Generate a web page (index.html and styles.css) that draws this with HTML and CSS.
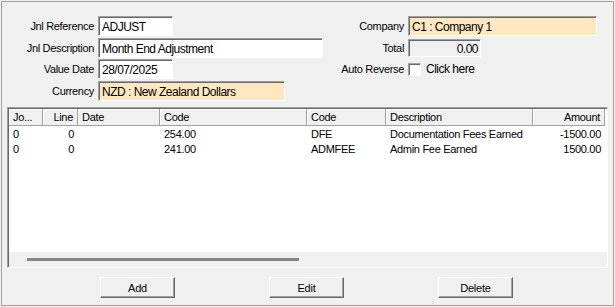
FILE: index.html
```html
<!DOCTYPE html>
<html lang="en">
<head>
    <meta charset="UTF-8">
    <title>Journal Entry</title>
    <link rel="stylesheet" href="styles.css">
</head>
<body>
    <div class="frame">
        <div class="form">
            <div class="form-left">
                <label class="lbl">Jnl Reference</label>
                <div class="field short">ADJUST</div>
                <label class="lbl">Jnl Description</label>
                <div class="field long">Month End Adjustment</div>
                <label class="lbl">Value Date</label>
                <div class="field short">28/07/2025</div>
                <label class="lbl">Currency</label>
                <div class="field lookup currency">NZD : New Zealand Dollars</div>
            </div>
            <div class="form-right">
                <label class="lbl">Company</label>
                <div class="field lookup company">C1 : Company 1</div>
                <label class="lbl">Total</label>
                <div class="field readonly total">0.00</div>
                <label class="lbl">Auto Reverse</label>
                <div class="check-row"><span class="checkbox"></span>Click here</div>
            </div>
        </div>

        <div class="grid">
            <div class="grid-head">
                <div class="col c-jo">Jo...</div>
                <div class="col c-line num">Line</div>
                <div class="col c-date">Date</div>
                <div class="col c-code">Code</div>
                <div class="col c-code2">Code</div>
                <div class="col c-desc">Description</div>
                <div class="col c-amt num">Amount</div>
            </div>
            <div class="grid-body">
                <div class="grid-row">
                    <div class="col c-jo">0</div>
                    <div class="col c-line num">0</div>
                    <div class="col c-date"></div>
                    <div class="col c-code">254.00</div>
                    <div class="col c-code2">DFE</div>
                    <div class="col c-desc">Documentation Fees Earned</div>
                    <div class="col c-amt num">-1500.00</div>
                </div>
                <div class="grid-row">
                    <div class="col c-jo">0</div>
                    <div class="col c-line num">0</div>
                    <div class="col c-date"></div>
                    <div class="col c-code">241.00</div>
                    <div class="col c-code2">ADMFEE</div>
                    <div class="col c-desc">Admin Fee Earned</div>
                    <div class="col c-amt num">1500.00</div>
                </div>
            </div>
            <div class="hscroll"><span class="thumb"></span></div>
        </div>

        <div class="actions">
            <button class="btn">Add</button>
            <button class="btn">Edit</button>
            <button class="btn">Delete</button>
        </div>
    </div>
</body>
</html>
```

FILE: styles.css
```css
body {
    margin: 0;
    padding: 1px;
    background-color: #f0f0f0;
    font-family: 'Liberation Sans', Arial, sans-serif;
    font-size: 11px;
    letter-spacing: -0.3px;
    color: #000;
}

.frame {
    box-sizing: border-box;
    width: 613px;
    height: 305px;
    border: 1px solid #a0a0a0;
    background-color: #f0f0f0;
}

.form {
    display: flex;
    padding-top: 14px;
    height: 91px;
}

.form-left,
.form-right {
    display: grid;
    align-items: center;
    column-gap: 4px;
    grid-auto-rows: 20px;
    row-gap: 1.7px;
}

.form-left {
    width: 330px;
    grid-template-columns: 92px auto;
}

.form-right {
    grid-template-columns: 72px auto;
}

.lbl {
    text-align: right;
    white-space: nowrap;
    letter-spacing: -0.33px;
}

.field {
    box-sizing: border-box;
    height: 20px;
    padding: 2px 3px 0 3px;
    background-color: #fff;
    border: 1px solid #fff;
    border-top-color: #a0a0a0;
    border-left-color: #a0a0a0;
    box-shadow: inset 1px 1px 0 #696969;
    font-size: 12px;
    letter-spacing: -0.5px;
    line-height: 16px;
    white-space: nowrap;
}

.short { width: 75px; }
.long { width: 225px; }

.lookup {
    background-color: #ffe8c0;
}

.currency { width: 187px; }
.company { width: 189px; }

.readonly {
    background-color: #f0f0f0;
}

.total {
    width: 73px;
    height: 18px;
    line-height: 15px;
    text-align: right;
    padding-right: 2px;
}

.check-row {
    display: flex;
    align-items: center;
    gap: 5px;
    font-size: 12px;
    letter-spacing: -0.5px;
}

.checkbox {
    box-sizing: border-box;
    width: 13px;
    height: 13px;
    background-color: #fff;
    border: 1px solid #fff;
    border-top-color: #a0a0a0;
    border-left-color: #a0a0a0;
    box-shadow: inset 1px 1px 0 #696969;
}

.grid {
    box-sizing: border-box;
    margin: 0 0 0 5px;
    width: 601px;
    height: 161px;
    display: flex;
    flex-direction: column;
    border: 1px solid #fff;
    border-top-color: #a0a0a0;
    border-left-color: #a0a0a0;
    box-shadow: inset 1px 1px 0 #696969;
    padding: 1px 0 0 1px;
}

.grid-head {
    display: flex;
    height: 17px;
    background-color: #fff;
}

.grid-head .col {
    box-sizing: border-box;
    height: 17px;
    line-height: 16px;
    padding: 0 4px;
    background-color: #f0f0f0;
    border-right: 1px solid #a0a0a0;
    border-bottom: 1px solid #a0a0a0;
    box-shadow: inset 1px 1px 0 #fff;
}

.grid-body {
    flex: 1;
    background-color: #fff;
    padding-top: 1px;
}

.grid-row {
    display: flex;
    height: 15px;
    line-height: 15px;
}

.col {
    box-sizing: border-box;
    padding: 0 4px;
    white-space: nowrap;
    overflow: hidden;
}

.num { text-align: right; }

.c-jo { width: 34px; }
.c-line { width: 35px; }
.c-date { width: 82px; }
.c-code { width: 147px; }
.c-code2 { width: 79px; }
.c-desc { width: 147px; }
.c-amt { width: 72px; }

.hscroll {
    height: 15px;
    background-color: #f0f0f0;
    display: flex;
    align-items: center;
}

.thumb {
    display: block;
    margin-left: 18px;
    width: 272px;
    height: 3px;
    background-color: #858585;
}

.actions {
    display: flex;
    gap: 94px;
    padding: 9px 0 0 98px;
}

.btn {
    box-sizing: border-box;
    width: 75px;
    height: 21px;
    padding: 0;
    font-family: 'Liberation Sans', Arial, sans-serif;
    font-size: 11px;
    letter-spacing: -0.2px;
    color: #000;
    background-color: #f0f0f0;
    border: 1px solid #696969;
    border-top-color: #fff;
    border-left-color: #fff;
    box-shadow: inset -1px -1px 0 #a0a0a0;
}
```
